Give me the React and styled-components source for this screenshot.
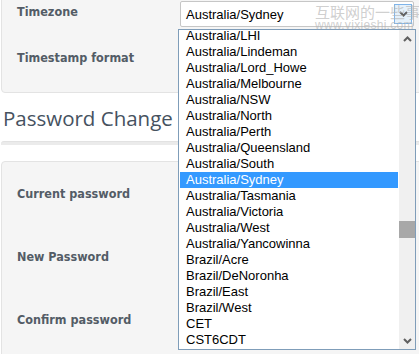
import styled, { createGlobalStyle } from "styled-components";

const zones = [
  "Australia/LHI",
  "Australia/Lindeman",
  "Australia/Lord_Howe",
  "Australia/Melbourne",
  "Australia/NSW",
  "Australia/North",
  "Australia/Perth",
  "Australia/Queensland",
  "Australia/South",
  "Australia/Sydney",
  "Australia/Tasmania",
  "Australia/Victoria",
  "Australia/West",
  "Australia/Yancowinna",
  "Brazil/Acre",
  "Brazil/DeNoronha",
  "Brazil/East",
  "Brazil/West",
  "CET",
  "CST6CDT",
];

const selected = "Australia/Sydney";

function Chevron({ up }) {
  return (
    <svg width="9" height="6" viewBox="0 0 9 6">
      <polyline
        points={up ? "1,5 4.5,1.5 8,5" : "1,1 4.5,4.5 8,1"}
        fill="none"
        stroke="#606060"
        strokeWidth="2"
      />
    </svg>
  );
}

function App() {
  return (
    <>
      <GlobalStyle />
      <Page>
        <Panel $first>
          <Row $h={46}>
            <Label>Timezone</Label>
            <Select>
              <SelectText>{selected}</SelectText>
              <SelectButton>
                <Chevron />
              </SelectButton>
            </Select>
          </Row>
          <Row $h={34}>
            <Label>Timestamp format</Label>
          </Row>
        </Panel>

        <Title>Password Change</Title>
        <Rule />

        <Panel $pad={22}>
          <Row $h={63}>
            <Label>Current password</Label>
          </Row>
          <Row $h={63}>
            <Label>New Password</Label>
          </Row>
          <Row $h={63}>
            <Label>Confirm password</Label>
          </Row>
        </Panel>

        <Watermark>
          <WmTitle>互联网的一些事</WmTitle>
          <WmUrl>www.yixieshi.com</WmUrl>
        </Watermark>

        <Dropdown>
          <List>
            <Items>
              {zones.map((z) => (
                <Option key={z} $active={z === selected}>
                  {z}
                </Option>
              ))}
            </Items>
          </List>
          <Scrollbar>
            <ArrowBtn>
              <Chevron up />
            </ArrowBtn>
            <Track>
              <Thumb />
            </Track>
            <ArrowBtn>
              <Chevron />
            </ArrowBtn>
          </Scrollbar>
        </Dropdown>
      </Page>
    </>
  );
}

export default App;

const GlobalStyle = createGlobalStyle`
  body {
    margin: 0;
    background: #fff;
    overflow: hidden;
    font-family: "Liberation Sans", Arial, sans-serif;
  }
`;

const Page = styled.div`
  position: relative;
  width: 440px;
  height: 354px;
  overflow: hidden;
`;

const Panel = styled.div`
  margin-left: 1px;
  margin-top: ${(p) => (p.$first ? "-6px" : "0")};
  padding: ${(p) => p.$pad ?? 7}px 15px 10px;
  background: #f5f5f5;
  border: 1px solid #e3e3e3;
  border-radius: 4px;
`;

const Row = styled.div`
  display: grid;
  grid-template-columns: 163px 1fr;
  align-items: start;
  height: ${(p) => p.$h}px;
`;

const Label = styled.div`
  padding-top: 2px;
  font-family: "DejaVu Sans Condensed", "DejaVu Sans", sans-serif;
  font-weight: bold;
  font-size: 12.5px;
  line-height: 16px;
  color: #535c66;
`;

const Select = styled.div`
  display: flex;
  align-items: center;
  justify-content: space-between;
  width: 234px;
  height: 26px;
  margin-top: -1px;
  box-sizing: border-box;
  padding: 0 1px 0 5px;
  background: #fff;
  border: 1px solid #c6c6c6;
  border-radius: 2px;
`;

const SelectText = styled.span`
  font-size: 13px;
  color: #000;
`;

const SelectButton = styled.div`
  display: flex;
  align-items: center;
  justify-content: center;
  width: 16px;
  height: 18px;
  background: #e5f1fb;
  border: 1px solid #7eb4ea;
`;

const Title = styled.h2`
  margin: 14px 0 0 3px;
  font-family: "Open Sans", sans-serif;
  font-weight: normal;
  font-size: 20.5px;
  line-height: 23px;
  color: #46525f;
`;

const Rule = styled.div`
  margin: 11px 0 16px 1px;
  height: 3px;
  background: #ebebeb;
  border-top: 1px solid #e2e2e2;
  border-radius: 3px 3px 0 0;
`;

const Watermark = styled.div`
  position: absolute;
  left: 315px;
  top: 4px;
  color: rgba(180, 180, 180, 0.65);
  pointer-events: none;
`;

const WmTitle = styled.div`
  font-family: "Noto Sans CJK SC", sans-serif;
  font-size: 15px;
  line-height: 16px;
  white-space: nowrap;
`;

const WmUrl = styled.div`
  font-family: "Liberation Sans", sans-serif;
  font-size: 12px;
  line-height: 10px;
  letter-spacing: 0.3px;
`;

const Dropdown = styled.div`
  position: absolute;
  left: 178px;
  top: 29px;
  width: 238px;
  height: 321px;
  box-sizing: border-box;
  display: flex;
  background: #fff;
  border: 1px solid #7f9db9;
`;

const List = styled.div`
  flex: 1;
  overflow: hidden;
  padding: 0 1px;
`;

const Items = styled.div`
  margin-top: -2px;
`;

const Option = styled.div`
  height: 16px;
  padding-left: 6px;
  font-size: 13px;
  line-height: 16px;
  color: ${(p) => (p.$active ? "#fff" : "#000")};
  background: ${(p) => (p.$active ? "#3399ff" : "transparent")};
`;

const Scrollbar = styled.div`
  width: 16px;
  display: flex;
  flex-direction: column;
  background: #f0f0f0;
`;

const ArrowBtn = styled.div`
  height: 17px;
  display: flex;
  align-items: center;
  justify-content: center;
`;

const Track = styled.div`
  flex: 1;
`;

const Thumb = styled.div`
  margin-top: 174px;
  height: 17px;
  background: #a8a8a8;
`;
